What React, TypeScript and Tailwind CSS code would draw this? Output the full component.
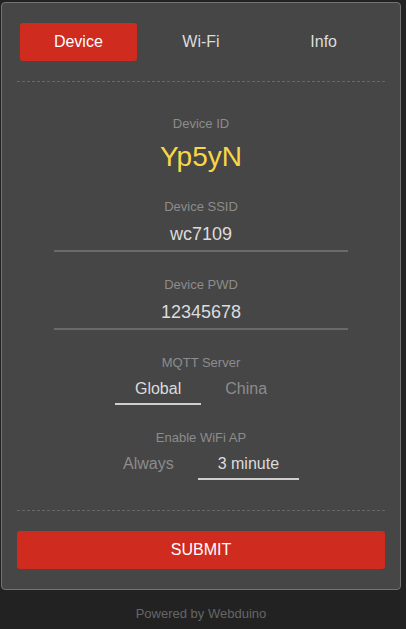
import { useState } from "react";

const tabs = ["Device", "Wi-Fi", "Info"];

function Label({ text, className = "" }: { text: string; className?: string }) {
  return <p className={`text-center text-[13px] leading-[16px] text-[#8c8c8c] ${className}`}>{text}</p>;
}

function Field({ value, className = "" }: { value: string; className?: string }) {
  return (
    <div className={`mx-auto w-[294px] border-b-2 border-[#6a6a6a] pb-[4px] text-center text-[18px] leading-[24px] text-[#dcdcdc] ${className}`}>
      {value}
    </div>
  );
}

function Options({ items, selected, className = "" }: { items: string[]; selected: string; className?: string }) {
  return (
    <div className={`flex justify-center gap-[4px] ${className}`}>
      {items.map((item) => (
        <span
          key={item}
          className={`border-b-2 px-5 pb-[2px] text-[16px] leading-[24px] ${
            item === selected ? "border-[#cfcfcf] text-[#dcdcdc]" : "border-transparent text-[#8c8c8c]"
          }`}
        >
          {item}
        </span>
      ))}
    </div>
  );
}

export default function App() {
  const [tab, setTab] = useState("Device");

  return (
    <div className="min-h-screen bg-[#222222] pt-[2px] font-['Liberation_Sans',Arial,sans-serif]">
      <div className="ml-[1px] w-[400px] rounded-[4px] border border-[#737373] bg-[#464646] px-[15px] pb-5 pt-5">
        <div className="grid grid-cols-3">
          {tabs.map((t) => (
            <div key={t} className="px-[3px]">
              <button
                onClick={() => setTab(t)}
                className={`h-[38px] w-full rounded-[3px] text-[16px] leading-[38px] ${
                  tab === t ? "bg-[#cf2b1f] text-white" : "text-[#dcdcdc]"
                }`}
              >
                {t}
              </button>
            </div>
          ))}
        </div>

        <div className="mt-5 border-t border-dashed border-[#65696a]" />

        <Label text="Device ID" className="mt-[34px]" />
        <p className="mt-[9px] text-center text-[28px] leading-[32px] text-[#f8d646]">Yp5yN</p>

        <Label text="Device SSID" className="mt-[26px]" />
        <Field value="wc7109" className="mt-[7px]" />

        <Label text="Device PWD" className="mt-[25px]" />
        <Field value="12345678" className="mt-[7px]" />

        <Label text="MQTT Server" className="mt-[25px]" />
        <Options items={["Global", "China"]} selected="Global" className="mt-[6px]" />

        <Label text="Enable WiFi AP" className="mt-[25px]" />
        <Options items={["Always", "3 minute"]} selected="3 minute" className="mt-[6px]" />

        <div className="mt-[30px] border-t border-dashed border-[#65696a]" />

        <button className="mt-5 h-[38px] w-full rounded-[3px] bg-[#cf2b1f] text-[16px] leading-[38px] text-white">
          SUBMIT
        </button>
      </div>

      <p className="ml-[1px] mt-[16px] w-[400px] text-center text-[13px] leading-[16px] text-[#666666]">Powered by Webduino</p>
    </div>
  );
}
